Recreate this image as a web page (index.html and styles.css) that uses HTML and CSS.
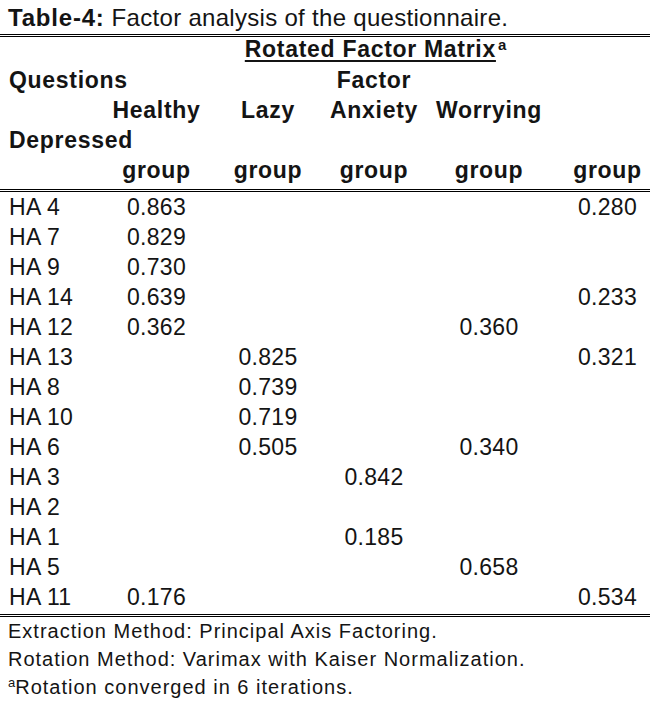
FILE: index.html
```html
<!DOCTYPE html>
<html lang="en">
<head>
<meta charset="utf-8">
<title>Table-4: Factor analysis of the questionnaire</title>
<link rel="stylesheet" href="styles.css">
</head>
<body>
<div class="caption"><b>Table-4:</b> Factor analysis of the questionnaire.</div>
<table class="matrix">
  <colgroup>
    <col class="w0"><col class="w1"><col class="w2"><col class="w3"><col class="w4"><col class="w5">
  </colgroup>
  <thead>
    <tr class="title-row">
      <td></td>
      <td colspan="5"><span class="ul">Rotated Factor Matrix</span><span class="sup">a</span></td>
    </tr>
    <tr>
      <td colspan="3" class="q">Questions</td>
      <td>Factor</td>
      <td class="c4"></td>
      <td></td>
    </tr>
    <tr>
      <td></td>
      <td>Healthy</td>
      <td>Lazy</td>
      <td>Anxiety</td>
      <td class="c4">Worrying</td>
      <td></td>
    </tr>
    <tr>
      <td colspan="2" class="q">Depressed</td>
      <td></td><td></td><td class="c4"></td><td></td>
    </tr>
    <tr class="group-row">
      <td></td>
      <td>group</td>
      <td>group</td>
      <td>group</td>
      <td class="c4">group</td>
      <td>group</td>
    </tr>
  </thead>
  <tbody>
    <tr><td class="q">HA 4</td><td>0.863</td><td></td><td></td><td class="c4"></td><td>0.280</td></tr>
    <tr><td class="q">HA 7</td><td>0.829</td><td></td><td></td><td class="c4"></td><td></td></tr>
    <tr><td class="q">HA 9</td><td>0.730</td><td></td><td></td><td class="c4"></td><td></td></tr>
    <tr><td class="q">HA 14</td><td>0.639</td><td></td><td></td><td class="c4"></td><td>0.233</td></tr>
    <tr><td class="q">HA 12</td><td>0.362</td><td></td><td></td><td class="c4">0.360</td><td></td></tr>
    <tr><td class="q">HA 13</td><td></td><td>0.825</td><td></td><td class="c4"></td><td>0.321</td></tr>
    <tr><td class="q">HA 8</td><td></td><td>0.739</td><td></td><td class="c4"></td><td></td></tr>
    <tr><td class="q">HA 10</td><td></td><td>0.719</td><td></td><td class="c4"></td><td></td></tr>
    <tr><td class="q">HA 6</td><td></td><td>0.505</td><td></td><td class="c4">0.340</td><td></td></tr>
    <tr><td class="q">HA 3</td><td></td><td></td><td>0.842</td><td class="c4"></td><td></td></tr>
    <tr><td class="q">HA 2</td><td></td><td></td><td></td><td class="c4"></td><td></td></tr>
    <tr><td class="q">HA 1</td><td></td><td></td><td>0.185</td><td class="c4"></td><td></td></tr>
    <tr><td class="q">HA 5</td><td></td><td></td><td></td><td class="c4">0.658</td><td></td></tr>
    <tr class="last-row"><td class="q">HA 11</td><td>0.176</td><td></td><td></td><td class="c4"></td><td>0.534</td></tr>
  </tbody>
</table>
<div class="notes">
  <div class="note">Extraction Method: Principal Axis Factoring.</div>
  <div class="note">Rotation Method: Varimax with Kaiser Normalization.</div>
  <div class="note"><span class="note-sup">a</span>Rotation converged in 6 iterations.</div>
</div>
</body>
</html>
```
FILE: styles.css
```css
html, body {
  margin: 0;
  padding: 0;
  background: #ffffff;
}

body {
  color: #141414;
  font-family: "Liberation Sans", Arial, sans-serif;
}

.caption {
  padding: 3px 0 0 8px;
  height: 31px;
  font-size: 24px;
  line-height: 30px;
  letter-spacing: 0.3px;
  white-space: nowrap;
}

.caption b {
  letter-spacing: 0.8px;
}

.matrix {
  width: 650px;
  table-layout: fixed;
  border-collapse: separate;
  border-spacing: 0;
  border-top: 3px double #000000;
  border-bottom: 3px double #000000;
}

.w0 { width: 101px; }
.w1 { width: 111px; }
.w2 { width: 112px; }
.w3 { width: 100px; }
.w4 { width: 141px; }
.w5 { width: 85px; }

.matrix td {
  padding: 0;
  text-align: center;
  white-space: nowrap;
  overflow: visible;
}

.matrix td.c4 {
  padding-right: 11px;
}

.matrix td.q {
  text-align: left;
  padding-left: 9px;
}

.matrix thead td {
  font-weight: bold;
  font-size: 23px;
  letter-spacing: 0.7px;
  height: 30px;
  line-height: 30px;
}

.matrix .title-row td {
  height: 28px;
  line-height: 24px;
  vertical-align: top;
}

.ul {
  text-decoration: underline;
  text-decoration-thickness: 2px;
  text-underline-offset: 3px;
}

.sup {
  font-size: 15px;
  letter-spacing: 0;
  vertical-align: 7px;
  line-height: 0;
  margin-left: 2px;
}

.matrix .group-row td {
  height: 30px;
  padding-bottom: 4px;
  vertical-align: top;
  border-bottom: 3px double #000000;
}

.matrix tbody td {
  font-size: 23px;
  letter-spacing: 0.3px;
  height: 30px;
  line-height: 30px;
}

.matrix .last-row td {
  height: 30px;
  padding-bottom: 2px;
  vertical-align: top;
}

.notes {
  padding-left: 8px;
  font-size: 20px;
  letter-spacing: 1px;
  line-height: 28px;
}

.note-sup {
  font-size: 13px;
  letter-spacing: 0;
  vertical-align: 7px;
  line-height: 0;
}
```
